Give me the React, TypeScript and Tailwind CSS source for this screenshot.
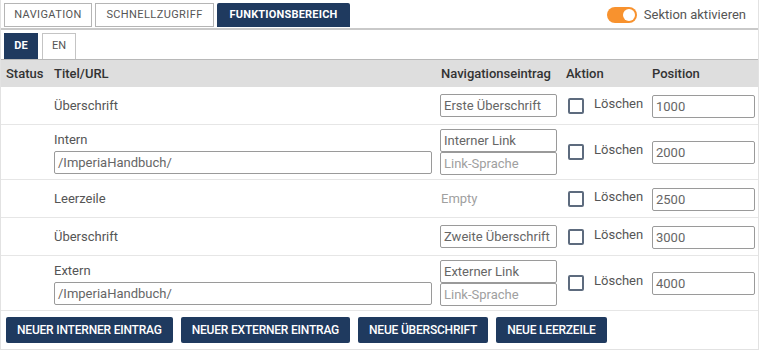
import React from "react";

const navy = "bg-[#1f3a5f]";

type Row = {
  title: string;
  url?: string;
  nav?: string;
  nav2?: string;
  empty?: boolean;
  pos: string;
};

const rows: Row[] = [
  { title: "Überschrift", nav: "Erste Überschrift", pos: "1000" },
  { title: "Intern", url: "/ImperiaHandbuch/", nav: "Interner Link", nav2: "Link-Sprache", pos: "2000" },
  { title: "Leerzeile", empty: true, pos: "2500" },
  { title: "Überschrift", nav: "Zweite Überschrift", pos: "3000" },
  { title: "Extern", url: "/ImperiaHandbuch/", nav: "Externer Link", nav2: "Link-Sprache", pos: "4000" },
];

function Field({ value, placeholder, className = "" }: { value?: string; placeholder?: boolean; className?: string }) {
  return (
    <div
      className={`h-[23px] border border-[#9a9a9a] rounded-[2px] bg-white px-[3px] flex items-center text-[13px] leading-none whitespace-nowrap overflow-hidden ${
        placeholder ? "text-[#a0a0a0]" : "text-[#666]"
      } ${className}`}
    >
      {value}
    </div>
  );
}

function TableRow({ row }: { row: Row }) {
  const tall = !!row.url;
  return (
    <div
      className={`grid grid-cols-[48px_387px_125px_86px_1fr] items-center border-b border-[#e6e6e6] ${
        tall ? "h-[55px]" : "h-[38px]"
      }`}
    >
      <div />
      <div className="pl-[5px] pr-[4px]">
        <div className="text-[13px] text-[#555]">{row.title}</div>
        {row.url && <Field value={row.url} className="w-[378px] mt-[1px]" />}
      </div>
      <div className="pl-[4px]">
        {row.empty ? (
          <div className="text-[13px] text-[#a0a0a0] pl-[1px]">Empty</div>
        ) : (
          <div className="flex flex-col">
            <Field value={row.nav} className="w-[117px]" />
            {row.nav2 && <Field value={row.nav2} placeholder className="w-[117px]" />}
          </div>
        )}
      </div>
      <div className="flex items-center pl-[7px] gap-[10px]">
        <div className="w-[16px] h-[16px] border-2 border-[#5d6b7e] rounded-[2px] bg-white" />
        <span className="text-[13px] text-[#555] -mt-[4px]">Löschen</span>
      </div>
      <div className="pl-[5px]">
        <Field value={row.pos} className="w-[103px] h-[22px] mt-[1px]" />
      </div>
    </div>
  );
}

export default function App() {
  return (
    <div className="w-[759px] h-[350px] border-x border-b border-[#e2e2e2] bg-white font-['Roboto',sans-serif]">
      {/* Top tabs */}
      <div className="flex items-end justify-between px-[3px] pt-[3px] border-b-2 border-[#c9c9c9] h-[30px]">
        <div className="flex gap-[3px] pb-[1px]">
          <div className="h-[24px] w-[88px] border border-[#b5b5b5] flex items-center justify-center text-[11px] text-[#555] tracking-[0.4px]">
            NAVIGATION
          </div>
          <div className="h-[24px] w-[119px] border border-[#b5b5b5] flex items-center justify-center text-[11px] text-[#555] tracking-[0.4px]">
            SCHNELLZUGRIFF
          </div>
          <div className={`h-[24px] w-[133px] ${navy} rounded-t-[2px] flex items-center justify-center text-[11px] font-bold text-white tracking-[0.2px]`}>
            FUNKTIONSBEREICH
          </div>
        </div>
        <div className="flex items-center gap-[7px] self-start mt-[2px] mr-[9px]">
          <div className="w-[30px] h-[16px] rounded-full bg-[#f8922e] relative">
            <div className="absolute right-[2px] top-[2px] w-[12px] h-[12px] rounded-full bg-white" />
          </div>
          <span className="text-[13px] text-[#555]">Sektion aktivieren</span>
        </div>
      </div>

      {/* Language tabs */}
      <div className="flex gap-[4px] px-[3px] pt-[3px] h-[29px] items-end">
        <div className={`h-[26px] w-[34px] ${navy} flex items-center justify-center text-[11px] font-bold text-white`}>DE</div>
        <div className="h-[26px] w-[34px] border border-b-0 border-[#c4c4c4] flex items-center justify-center text-[11px] text-[#555]">
          EN
        </div>
      </div>

      {/* Header */}
      <div className="grid grid-cols-[48px_387px_125px_86px_1fr] h-[28px] items-center bg-[#dedede] border-t border-[#b8b8b8] text-[13px] font-medium text-[#333]">
        <div className="pl-[5px]">Status</div>
        <div className="pl-[5px]">Titel/URL</div>
        <div className="pl-[5px]">Navigationseintrag</div>
        <div className="pl-[5px]">Aktion</div>
        <div className="pl-[5px]">Position</div>
      </div>

      {rows.map((r, i) => (
        <TableRow key={i} row={r} />
      ))}

      {/* Buttons */}
      <div className="flex gap-[8px] px-[5px] pt-[6px]">
        {["NEUER INTERNER EINTRAG", "NEUER EXTERNER EINTRAG", "NEUE ÜBERSCHRIFT", "NEUE LEERZEILE"].map((b) => (
          <div
            key={b}
            className={`h-[26px] px-[11px] ${navy} rounded-[2px] flex items-center text-[12px] font-medium text-white tracking-[-0.2px] whitespace-nowrap`}
          >
            {b}
          </div>
        ))}
      </div>
    </div>
  );
}
